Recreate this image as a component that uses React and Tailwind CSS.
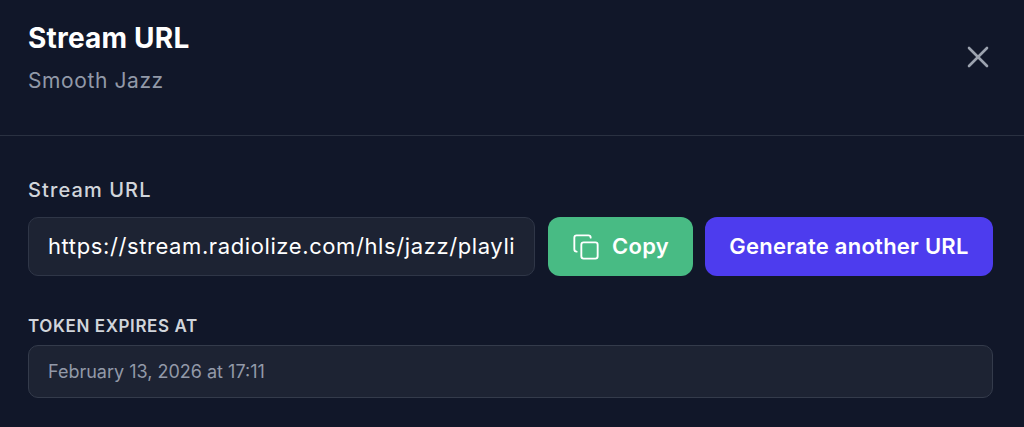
import React from 'react';
import { X, Copy } from 'lucide-react';

export default function App() {
  return (
    <div className="w-[1024px] h-[427px] overflow-hidden bg-[#111729] font-['Inter',sans-serif] text-white">
      {/* Header */}
      <div className="flex items-start justify-between h-[136px] pt-5 pl-7 pr-7 border-b border-[#2a3141]">
        <div>
          <h2 className="text-[28px] leading-[36px] font-bold tracking-[0.2px]">Stream URL</h2>
          <p className="mt-[11px] text-[21px] leading-[28px] text-[#9299a8] tracking-[0.6px]">Smooth Jazz</p>
        </div>
        <X size={36} strokeWidth={1.75} className="mt-[19px] text-[#9ca3af]" />
      </div>

      <div className="pt-[41px] px-7">
        <label className="block text-[20px] leading-[26px] font-medium text-[#d1d5db] tracking-[1.1px]">Stream URL</label>
        <div className="flex gap-[13px] mt-[14px]">
          <div className="w-[507px] h-[59px] flex items-center px-[19px] rounded-[10px] bg-[#1d2333] border border-[#2f3647] text-[22px] tracking-[0.6px] overflow-hidden whitespace-nowrap">
            https://stream.radiolize.com/hls/jazz/playli
          </div>
          <button className="w-[145px] h-[59px] flex items-center justify-center gap-[12px] rounded-xl bg-[#48bb84] text-[22px] font-semibold tracking-[0.3px]">
            <Copy size={28} strokeWidth={1.6} />
            Copy
          </button>
          <button className="w-[288px] ml-[-1px] h-[59px] flex items-center justify-center rounded-xl bg-[#4d3cee] text-[22px] font-semibold tracking-[0.25px]">
            Generate another URL
          </button>
        </div>
        <label className="block mt-[38px] text-[17px] leading-[24px] font-semibold text-[#d1d5db] tracking-[0.6px]">TOKEN EXPIRES AT</label>
        <div className="mt-[7px] w-[965px] h-[53px] flex items-center px-[19px] rounded-[10px] bg-[#1d2333] border border-[#343b4b] text-[18px] text-[#9299a8]">
          February 13, 2026 at 17:11
        </div>
      </div>
    </div>
  );
}
